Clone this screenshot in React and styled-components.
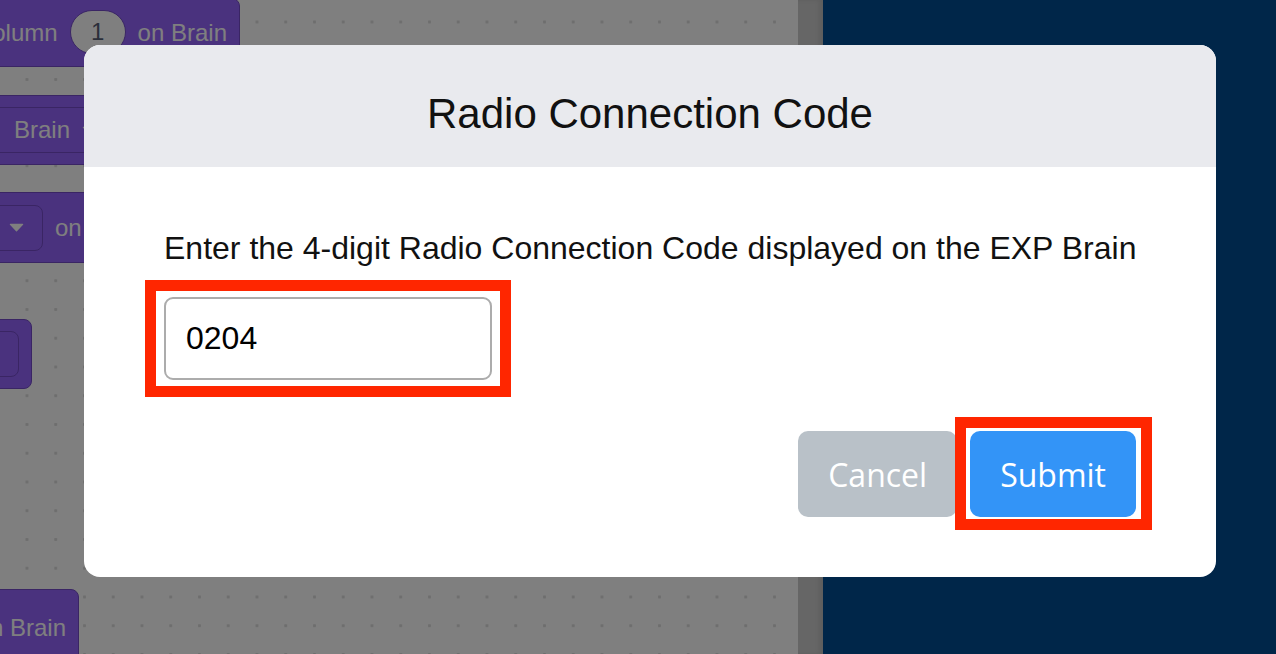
import React from "react";
import styled, { createGlobalStyle } from "styled-components";

function Caret() {
  return (
    <CaretIcon viewBox="0 0 16 9" width="15" height="9">
      <path d="M1.5 1.2 H14.5 L8 8 Z" fill="#ffffff" stroke="#ffffff" strokeWidth="1.4" strokeLinejoin="round" />
    </CaretIcon>
  );
}

function App() {
  return (
    <>
      <GlobalStyle />
      <Screen>
        <Workspace>
          <Block $top={-2} $left={-200} $width={440} $height={69} $align="end">
            <BlockText>Column</BlockText>
            <NumberOval>1</NumberOval>
            <BlockText>on Brain</BlockText>
          </Block>

          <Block $top={95} $left={-30} $width={330} $height={70}>
            <Dropdown $padLeft={32} $padRight={14}>
              <BlockText>Brain</BlockText>
              <Caret />
            </Dropdown>
            <BlockText>on</BlockText>
          </Block>

          <Block $top={192} $left={-30} $width={330} $height={71}>
            <Dropdown $padLeft={27} $padRight={18}>
              <Caret />
            </Dropdown>
            <BlockText>on Brain</BlockText>
          </Block>

          <Block $top={319} $left={-60} $width={92} $height={70} $align="end">
            <Dropdown $padLeft={20} $padRight={18}>
              <Caret />
            </Dropdown>
          </Block>

          <Block $top={589} $left={-200} $width={279} $height={78} $align="end">
            <BlockText>on Brain</BlockText>
          </Block>
        </Workspace>
        <ScrollTrack />
        <SidePanel />

        <Backdrop>
          <Dialog>
            <Header>Radio Connection Code</Header>
            <Body>
              <Prompt>
                Enter the 4-digit Radio Connection Code displayed on the EXP Brain
              </Prompt>
              <Highlight $mt={31} $top={17} $bottom={17} $left={19} $right={19}>
                <CodeInput type="text" defaultValue="0204" maxLength="4" />
              </Highlight>
              <Actions>
                <Button $variant="cancel">Cancel</Button>
                <Highlight $top={14} $bottom={13} $left={15} $right={16}>
                  <Button $variant="submit">Submit</Button>
                </Highlight>
              </Actions>
            </Body>
          </Dialog>
        </Backdrop>
      </Screen>
    </>
  );
}

export default App;

const GlobalStyle = createGlobalStyle`
  html, body {
    margin: 0;
    padding: 0;
  }
  body {
    font-family: "Liberation Sans", Arial, sans-serif;
    overflow: hidden;
  }
`;

const Screen = styled.div`
  position: relative;
  display: flex;
  width: 1276px;
  height: 654px;
  overflow: hidden;
`;

const Workspace = styled.div`
  position: relative;
  flex: none;
  width: 798px;
  height: 100%;
  overflow: hidden;
  background-color: #ffffff;
  background-image: radial-gradient(circle, #dcdcdc 1.3px, transparent 1.8px);
  background-size: 28.75px 28.75px;
  background-position: 12.6px 7.6px;
`;

const ScrollTrack = styled.div`
  flex: none;
  width: 25px;
  height: 100%;
  background: #cccccc;
  box-shadow: inset -4px 0 4px rgba(0, 0, 0, 0.08);
`;

const SidePanel = styled.div`
  flex: 1;
  height: 100%;
  background: #004c92;
`;

const Block = styled.div`
  position: absolute;
  top: ${(p) => p.$top}px;
  left: ${(p) => p.$left}px;
  width: ${(p) => p.$width}px;
  height: ${(p) => p.$height}px;
  box-sizing: border-box;
  display: flex;
  align-items: center;
  justify-content: ${(p) => (p.$align === "end" ? "flex-end" : "flex-start")};
  gap: 12px;
  padding: 0 12px 0 10px;
  background: #9464fc;
  border: 1.5px solid #744bc9;
  border-radius: 8px;
`;

const BlockText = styled.span`
  font-family: "Liberation Sans", Arial, sans-serif;
  font-size: 24px;
  color: #ffffff;
  white-space: nowrap;
`;

const NumberOval = styled.span`
  display: flex;
  align-items: center;
  justify-content: center;
  width: 56px;
  height: 44px;
  box-sizing: border-box;
  border-radius: 22px;
  background: #ffffff;
  border: 1.5px solid #744bc9;
  color: #575e75;
  font-size: 24px;
  margin-top: -2px;
`;

const Dropdown = styled.span`
  display: flex;
  align-items: center;
  gap: 12px;
  height: 46px;
  box-sizing: border-box;
  padding: 0 ${(p) => p.$padRight}px 0 ${(p) => p.$padLeft}px;
  border: 1.5px solid #744bc9;
  border-radius: 8px;
  background: #9464fc;
`;

const CaretIcon = styled.svg`
  display: block;
  flex: none;
`;

const Backdrop = styled.div`
  position: absolute;
  inset: 0;
  background: rgba(0, 0, 0, 0.5);
  padding: 45px 0 0 84px;
  box-sizing: border-box;
`;

const Dialog = styled.div`
  width: 1132px;
  height: 532px;
  display: flex;
  flex-direction: column;
  background: #ffffff;
  border-radius: 16px;
  overflow: hidden;
`;

const Header = styled.div`
  flex: none;
  height: 122px;
  box-sizing: border-box;
  padding-top: 15px;
  display: flex;
  align-items: center;
  justify-content: center;
  background: #e9eaee;
  font-size: 42px;
  color: #111111;
`;

const Body = styled.div`
  flex: 1;
  display: flex;
  flex-direction: column;
  padding: 63px 80px 60px;
`;

const Prompt = styled.p`
  margin: 0;
  font-size: 32px;
  line-height: 36px;
  color: #111111;
  text-align: center;
  white-space: nowrap;
`;

const Highlight = styled.div`
  position: relative;
  align-self: flex-start;
  display: flex;
  margin-top: ${(p) => p.$mt || 0}px;

  &::after {
    content: "";
    position: absolute;
    top: -${(p) => p.$top}px;
    bottom: -${(p) => p.$bottom}px;
    left: -${(p) => p.$left}px;
    right: -${(p) => p.$right}px;
    border: 11px solid #ff2600;
    pointer-events: none;
  }
`;

const CodeInput = styled.input`
  width: 328px;
  height: 83px;
  box-sizing: border-box;
  padding: 0 20px;
  border: 2px solid #acacac;
  border-radius: 9px;
  font-family: "Liberation Sans", Arial, sans-serif;
  font-size: 32px;
  color: #000000;
  outline: none;
`;

const Actions = styled.div`
  display: flex;
  justify-content: flex-end;
  gap: 13px;
  margin-top: 51px;
`;

const Button = styled.button`
  height: 86px;
  padding: 0 30px;
  border: none;
  border-radius: 10px;
  font-family: "Open Sans", sans-serif;
  font-size: 32px;
  color: #ffffff;
  cursor: pointer;
  background: ${(p) => (p.$variant === "submit" ? "#3394f7" : "#b9c1c8")};
`;
